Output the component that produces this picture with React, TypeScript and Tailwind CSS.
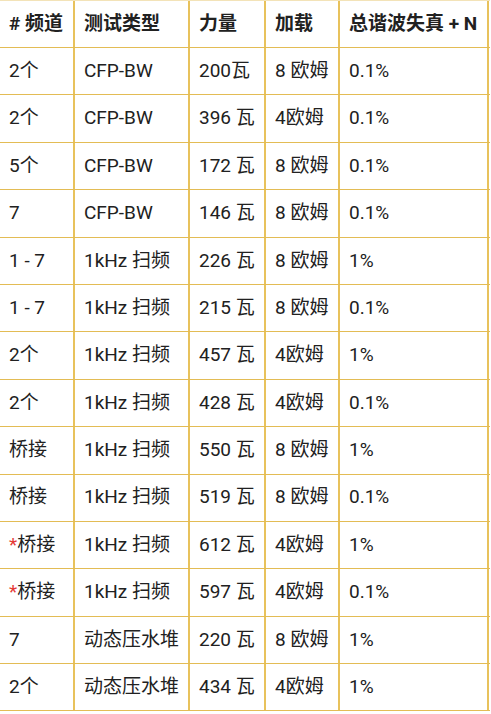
import React from "react";

const rows: [React.ReactNode, string, string, string, string][] = [
  ["2个", "CFP-BW", "200瓦", "8 欧姆", "0.1%"],
  ["2个", "CFP-BW", "396 瓦", "4欧姆", "0.1%"],
  ["5个", "CFP-BW", "172 瓦", "8 欧姆", "0.1%"],
  ["7", "CFP-BW", "146 瓦", "8 欧姆", "0.1%"],
  ["1 - 7", "1kHz 扫频", "226 瓦", "8 欧姆", "1%"],
  ["1 - 7", "1kHz 扫频", "215 瓦", "8 欧姆", "0.1%"],
  ["2个", "1kHz 扫频", "457 瓦", "4欧姆", "1%"],
  ["2个", "1kHz 扫频", "428 瓦", "4欧姆", "0.1%"],
  ["桥接", "1kHz 扫频", "550 瓦", "8 欧姆", "1%"],
  ["桥接", "1kHz 扫频", "519 瓦", "8 欧姆", "0.1%"],
  [<><span className="text-[#e53935]">*</span>桥接</>, "1kHz 扫频", "612 瓦", "4欧姆", "1%"],
  [<><span className="text-[#e53935]">*</span>桥接</>, "1kHz 扫频", "597 瓦", "4欧姆", "0.1%"],
  ["7", "动态压水堆", "220 瓦", "8 欧姆", "1%"],
  ["2个", "动态压水堆", "434 瓦", "4欧姆", "1%"],
];

const widths = ["w-[73px]", "w-[113px]", "w-[74px]", "w-[72px]", "w-[147px]"];

function Cell({ i, bold, children }: { i: number; bold?: boolean; children: React.ReactNode }) {
  return (
    <>
      <div
        className={`${widths[i]} shrink-0 h-full flex items-center pl-[9px] whitespace-nowrap ${bold ? "font-bold" : ""}`}
      >
        {children}
      </div>
      <div className="w-[2px] shrink-0 h-full bg-[#e8c25c]" />
    </>
  );
}

export default function App() {
  const header = ["# 频道", "测试类型", "力量", "加载", "总谐波失真 + N"];
  return (
    <div
      className="w-[491px] h-[714px] bg-white text-[#212121] text-[19px]"
      style={{ fontFamily: 'Roboto, "Noto Sans CJK SC", sans-serif' }}
    >
      <div className="w-[490px] border-t border-t-[#f3e3b8]">
        <div className="flex h-[47px] border-b border-b-[#e3bc55]">
          {header.map((h, i) => (
            <Cell key={i} i={i} bold>
              {h}
            </Cell>
          ))}
        </div>
        {rows.map((r, ri) => (
          <div key={ri} className="flex h-[47.4px] border-b border-b-[#e3bc55]">
            {r.map((c, i) => (
              <Cell key={i} i={i}>
                {c}
              </Cell>
            ))}
          </div>
        ))}
      </div>
    </div>
  );
}
